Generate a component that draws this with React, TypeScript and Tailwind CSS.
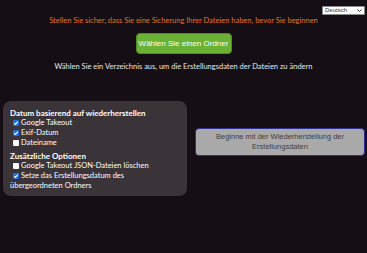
import React, { useState } from "react";

export default function App(): JSX.Element {
  const [opts, setOpts] = useState({
    takeout: true,
    exif: true,
    filename: false,
    deleteJson: false,
    parentDate: true,
  });

  const toggle = (k: keyof typeof opts) => setOpts((o) => ({ ...o, [k]: !o[k] }));

  return (
    <div className="w-[367px] h-[253px] overflow-hidden bg-[#150e14] font-['Lato',sans-serif] text-white">
      {/* language picker */}
      <div className="flex justify-end pt-[6px] pr-[2px]">
        <div className="relative w-[43px] h-[9px]">
          <select className="appearance-none block w-full h-full bg-white text-[#333] text-[6px] leading-[7px] pl-[2px] font-['Liberation_Sans',sans-serif] border border-[#8a8a8a] rounded-[1px]">
            <option>Deutsch</option>
            <option>English</option>
          </select>
          <svg className="absolute right-[3px] top-[3px] pointer-events-none" width="5" height="3" viewBox="0 0 5 3">
            <path d="M0.5 0.5 L2.5 2.5 L4.5 0.5" fill="none" stroke="#333" strokeWidth="1" />
          </svg>
        </div>
      </div>

      <p className="mt-[0px] text-center text-[7.5px] leading-[11px] text-[#e8711f]">
        Stellen Sie sicher, dass Sie eine Sicherung Ihrer Dateien haben, bevor Sie beginnen
      </p>

      <div className="mt-[7px] flex justify-center">
        <button className="w-[96px] h-[21px] rounded-[4px] bg-[#6ab136] border border-[#4f8f26] text-[8px] text-white font-['Liberation_Sans',sans-serif]">
          Wählen Sie einen Ordner
        </button>
      </div>

      <p className="mt-[7px] text-center text-[7.5px] leading-[11px] text-[#e9e6ea]">
        Wählen Sie ein Verzeichnis aus, um die Erstellungsdaten der Dateien zu ändern
      </p>

      <div className="mt-[29px] flex items-start gap-[8px] pl-[3px] pr-[2px]">
        {/* options panel */}
        <div className="w-[184px] h-[95px] rounded-[8px] bg-[#3a3338] pl-[7px] pt-[7px] text-[7.5px] leading-[10px]">
          <div className="font-bold text-[8px]">Datum basierend auf wiederherstellen</div>
          <Row checked={opts.takeout} onChange={() => toggle("takeout")} label="Google Takeout" />
          <Row checked={opts.exif} onChange={() => toggle("exif")} label="Exif-Datum" />
          <Row checked={opts.filename} onChange={() => toggle("filename")} label="Dateiname" />
          <div className="mt-[3px] font-bold text-[8px]">Zusätzliche Optionen</div>
          <Row
            checked={opts.deleteJson}
            onChange={() => toggle("deleteJson")}
            label="Google Takeout JSON-Dateien löschen"
          />
          <label className="block">
            <Box checked={opts.parentDate} onChange={() => toggle("parentDate")} />
            Setze das Erstellungsdatum des
            <br />
            übergeordneten Ordners
          </label>
        </div>

        {/* start button */}
        <div className="flex-1 pt-[27px]">
          <button className="w-full h-[28px] rounded-[4px] bg-[#a9a9a9] border border-[#2e318f] text-[7.5px] leading-[10px] text-[#3f3f3f] font-['Liberation_Sans',sans-serif]">
            Beginne mit der Wiederherstellung der
            <br />
            Erstellungsdaten
          </button>
        </div>
      </div>
    </div>
  );
}

function Box({ checked, onChange }: { checked: boolean; onChange: () => void }) {
  return (
    <span className="relative inline-block align-[-0.5px] w-[6px] h-[6px] ml-[3px] mr-[2px]">
      <input
        type="checkbox"
        checked={checked}
        onChange={onChange}
        className="appearance-none block m-0 w-[6px] h-[6px] rounded-[1px] bg-white checked:bg-[#1e6fe0]"
      />
      {checked && (
        <svg className="absolute left-0 top-0 pointer-events-none" width="6" height="6" viewBox="0 0 6 6">
          <path d="M1.2 3.1 L2.5 4.4 L4.9 1.5" fill="none" stroke="#fff" strokeWidth="1.1" />
        </svg>
      )}
    </span>
  );
}

function Row({ checked, onChange, label }: { checked: boolean; onChange: () => void; label: string }) {
  return (
    <label className="block">
      <Box checked={checked} onChange={onChange} />
      {label}
    </label>
  );
}
